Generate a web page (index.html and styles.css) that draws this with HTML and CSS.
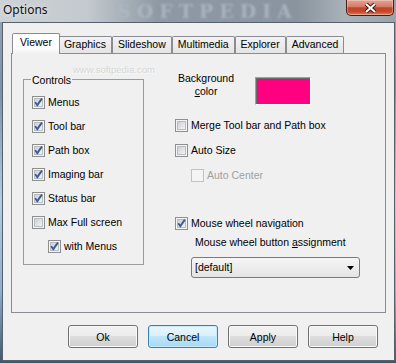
FILE: index.html
```html
<!DOCTYPE html>
<html lang="en">
<head>
    <meta charset="UTF-8">
    <title>Options</title>
    <link rel="stylesheet" href="styles.css">
</head>
<body>
    <!-- checkbox glyphs -->
    <svg class="defs" aria-hidden="true">
        <defs>
            <linearGradient id="cbFill" x1="0" y1="0" x2="1" y2="1">
                <stop offset="0" stop-color="#c9ccd1"/>
                <stop offset="1" stop-color="#f7f7f7"/>
            </linearGradient>
            <symbol id="cb-off" viewBox="0 0 13 13">
                <rect x="0.5" y="0.5" width="12" height="12" fill="#f4f4f4" stroke="#8e8f8f"/>
                <rect x="2.5" y="2.5" width="8" height="8" fill="url(#cbFill)" stroke="#b9bcc1"/>
            </symbol>
            <symbol id="cb-on" viewBox="0 0 13 13">
                <rect x="0.5" y="0.5" width="12" height="12" fill="#f4f4f4" stroke="#8e8f8f"/>
                <rect x="2.5" y="2.5" width="8" height="8" fill="url(#cbFill)" stroke="#b9bcc1"/>
                <path d="M3.2 6.3l2.1 2.8L9.9 2.6" fill="none" stroke="#3f5a98" stroke-width="1.9"/>
            </symbol>
            <symbol id="cb-dis" viewBox="0 0 13 13">
                <rect x="0.5" y="0.5" width="12" height="12" fill="#f4f4f4" stroke="#c2c2c2"/>
            </symbol>
        </defs>
    </svg>

    <div class="window">
        <!-- Title bar -->
        <div class="titlebar">
            <span class="glass-mark">SOFTPEDIA</span>
            <span class="title">Options</span>
            <div class="close">
                <svg width="13" height="10" viewBox="0 0 13 10">
                    <path d="M2 1l9 8M11 1l-9 8" stroke="#3b1710" stroke-width="4"/>
                    <path d="M2 1l9 8M11 1l-9 8" stroke="#ffffff" stroke-width="2"/>
                </svg>
            </div>
        </div>

        <div class="client">
            <!-- Tabs -->
            <div class="tabs">
                <div class="tab active">Viewer</div>
                <div class="tab">Graphics</div>
                <div class="tab">Slideshow</div>
                <div class="tab">Multimedia</div>
                <div class="tab">Explorer</div>
                <div class="tab">Advanced</div>
            </div>

            <div class="page">
                <span class="watermark">www.softpedia.com</span>

                <div class="group">
                    <div class="group-title">Controls</div>
                    <div class="checks">
                        <label class="check"><svg class="cb"><use href="#cb-on"/></svg>Menus</label>
                        <label class="check"><svg class="cb"><use href="#cb-on"/></svg>Tool bar</label>
                        <label class="check"><svg class="cb"><use href="#cb-on"/></svg>Path box</label>
                        <label class="check"><svg class="cb"><use href="#cb-on"/></svg>Imaging bar</label>
                        <label class="check"><svg class="cb"><use href="#cb-on"/></svg>Status bar</label>
                        <label class="check"><svg class="cb"><use href="#cb-off"/></svg>Max Full screen</label>
                        <label class="check indent"><svg class="cb"><use href="#cb-on"/></svg>with Menus</label>
                    </div>
                </div>

                <div class="options">
                    <div class="bg-row">
                        <div class="bg-label">Background<br><u>c</u>olor</div>
                        <div class="swatch"></div>
                    </div>
                    <label class="check merge"><svg class="cb"><use href="#cb-off"/></svg>Merge Tool bar and Path box</label>
                    <label class="check autosize"><svg class="cb"><use href="#cb-off"/></svg>Auto Size</label>
                    <label class="check autocenter disabled"><svg class="cb"><use href="#cb-dis"/></svg>Auto Center</label>
                    <label class="check wheel"><svg class="cb"><use href="#cb-on"/></svg>Mouse wheel navigation</label>
                    <div class="wheel-label">Mouse wheel button <u>a</u>ssignment</div>
                    <div class="select">
                        <span>[default]</span>
                        <svg width="7" height="4" viewBox="0 0 7 4"><path d="M0 0h7L3.5 4z" fill="#000"/></svg>
                    </div>
                </div>
            </div>

            <!-- Buttons -->
            <div class="buttons">
                <button class="btn">Ok</button>
                <button class="btn btn-default">Cancel</button>
                <button class="btn">Apply</button>
                <button class="btn">Help</button>
            </div>
        </div>
    </div>
</body>
</html>
```

FILE: styles.css
```css
* {
    box-sizing: border-box;
    margin: 0;
    padding: 0;
}

body {
    width: 396px;
    height: 363px;
    overflow: hidden;
    font-family: 'Liberation Sans', Arial, sans-serif;
    font-size: 10.5px;
    line-height: 13px;
    color: #000000;
}

.defs {
    position: absolute;
    width: 0;
    height: 0;
}

.window {
    width: 396px;
    height: 363px;
    display: flex;
    flex-direction: column;
    background: linear-gradient(180deg, #9aa6b2 0%, #7c90a6 25%, #b4cbe2 55%, #8eafcf 80%, #40566c 100%);
}

/* Title bar */
.titlebar {
    position: relative;
    height: 22px;
    display: flex;
    align-items: flex-start;
    background: linear-gradient(90deg, #cdd2d6 0%, #c3c9ce 22%, #8f99a3 40%, #8a949e 75%, #a9b1b9 87%, #99a3ad 100%);
}

.glass-mark {
    position: absolute;
    left: 117px;
    top: 0;
    font-family: 'DejaVu Serif', serif;
    font-weight: 700;
    font-size: 19px;
    line-height: 22px;
    letter-spacing: 6px;
    color: rgba(170, 184, 198, 0.85);
    filter: blur(0.8px);
}

.title {
    position: relative;
    padding: 2px 0 0 3px;
    font-family: 'Noto Sans', 'Open Sans', sans-serif;
    font-size: 12px;
    line-height: 16px;
    color: #111111;
    text-shadow: 0 0 5px rgba(255, 255, 255, 0.8);
}

.close {
    margin-left: auto;
    margin-right: 2px;
    width: 48px;
    height: 16px;
    border: 1px solid #4b1b12;
    border-top: none;
    border-radius: 0 0 5px 5px;
    background: linear-gradient(180deg, #e6a293 0%, #d57b66 45%, #c2432a 52%, #c64a2d 80%, #e08a62 100%);
    box-shadow: inset 0 0 0 1px rgba(255, 255, 255, 0.3);
    display: flex;
    justify-content: center;
    align-items: center;
}

/* Client area */
.client {
    height: 339px;
    margin: 0 1px 2px 2px;
    border: 1px solid #56616c;
    background-color: #f0f0f0;
    padding: 10px 8px 0;
    display: flex;
    flex-direction: column;
}

.tabs {
    display: flex;
    align-items: flex-end;
    height: 20px;
    padding-left: 3px;
}

.tab {
    height: 17px;
    padding: 1px 5px 0;
    border: 1px solid #898c95;
    border-bottom: none;
    border-radius: 2px 2px 0 0;
    background: linear-gradient(180deg, #f3f3f3, #e4e4e4);
    white-space: nowrap;
}

.tab.active {
    position: relative;
    z-index: 1;
    height: 21px;
    padding: 2px 7px 0;
    margin: 0 -2px -1px;
    background: linear-gradient(180deg, #ffffff 0%, #fdfdfd 70%, #f0f0f0 100%);
}

.page {
    position: relative;
    height: 260px;
    border: 1px solid #898c95;
    background-color: #f0f0f0;
    display: flex;
    align-items: flex-start;
    padding: 18px 0 0 11px;
}

.watermark {
    position: absolute;
    left: 61px;
    top: 10px;
    font-size: 9.5px;
    line-height: 11px;
    color: #d6d6d6;
    text-shadow: 1px 1px 0 #fafafa;
}

/* Controls group */
.group {
    width: 121px;
    height: 186px;
    margin-top: 7px;
    border: 1px solid #9c9c9c;
    padding-left: 8px;
}

.group-title {
    display: table;
    margin: -6px 0 0 -1px;
    padding: 0 1px;
    background-color: #f0f0f0;
}

.checks {
    display: flex;
    flex-direction: column;
    gap: 11px;
    margin-top: 9px;
}

.check {
    display: flex;
    align-items: center;
    gap: 3px;
    height: 13px;
    white-space: nowrap;
}

.cb {
    width: 13px;
    height: 13px;
    flex: none;
}

.indent {
    margin-left: 16px;
}

.disabled {
    color: #a0a0a0;
}

/* Right column */
.options {
    margin-left: 31px;
    display: flex;
    flex-direction: column;
    align-items: flex-start;
}

.bg-row {
    display: flex;
    align-items: flex-start;
}

.bg-label {
    margin-left: 3px;
    text-align: center;
}

.swatch {
    width: 56px;
    height: 28px;
    margin: 5px 0 0 21px;
    background-color: #ff0080;
    border: 1px solid;
    border-color: #a0a0a0 #ffffff #ffffff #a0a0a0;
    box-shadow: inset 1px 1px 0 #696969;
}

.merge {
    margin-top: 14px;
}

.autosize {
    margin-top: 12px;
}

.autocenter {
    margin: 12px 0 0 16px;
}

.wheel {
    margin-top: 35px;
}

.wheel-label {
    margin: 6px 0 0 20px;
}

.select {
    width: 169px;
    height: 21px;
    margin: 8px 0 0 16px;
    padding: 0 5px 0 3px;
    border: 1px solid #7a7a7a;
    border-radius: 3px;
    background: linear-gradient(180deg, #f6f6f6, #e4e4e4);
    display: flex;
    justify-content: space-between;
    align-items: center;
}

/* Buttons */
.buttons {
    display: flex;
    justify-content: flex-end;
    gap: 10px;
    margin-top: 12px;
    padding-right: 8px;
}

.btn {
    width: 70px;
    height: 23px;
    border: 1px solid #707070;
    border-radius: 3px;
    background: linear-gradient(180deg, #f2f2f2 0%, #ebebeb 50%, #dddddd 50%, #cfcfcf 100%);
    box-shadow: inset 0 0 0 1px #fbfbfb;
    font-family: inherit;
    font-size: 10.5px;
    color: #000000;
}

.btn-default {
    border-color: #3c7fb1;
    background: linear-gradient(180deg, #eaf6fd 0%, #d9f0fc 50%, #bee6fd 50%, #a7d9f5 100%);
    box-shadow: inset 0 0 0 1px #c8ecfc;
}
```
